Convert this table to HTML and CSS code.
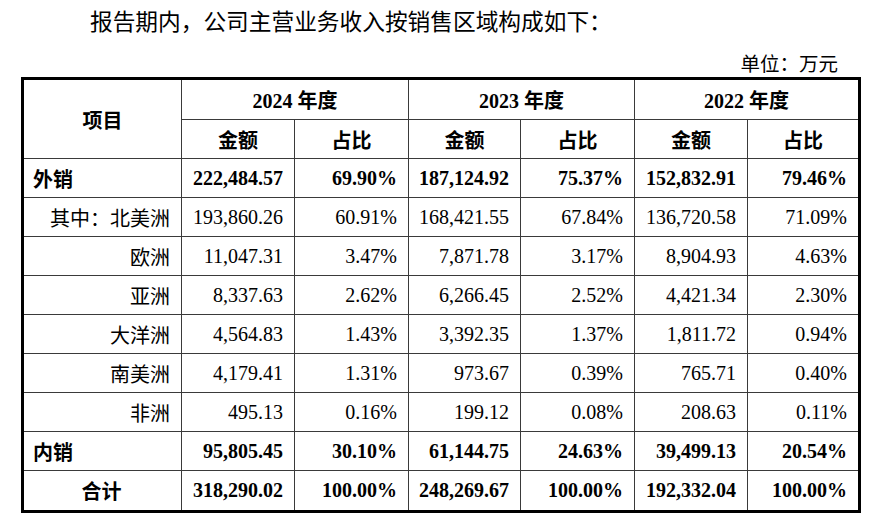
FILE: index.html
```html
<!DOCTYPE html>
<html lang="zh">
<head>
<meta charset="utf-8">
<title>主营业务收入按销售区域构成</title>
<link rel="stylesheet" href="styles.css">
</head>
<body>
<div class="page">
  <p class="intro">报告期内，公司主营业务收入按销售区域构成如下：</p>
  <p class="unit">单位：万元</p>
  <table class="sales">
    <colgroup>
      <col class="c-item">
      <col class="c-amt">
      <col class="c-pct">
      <col class="c-amt2">
      <col class="c-pct">
      <col class="c-amt">
      <col class="c-pct2">
    </colgroup>
    <thead>
      <tr class="hrow">
        <th rowspan="2">项目</th>
        <th colspan="2">2024 年度</th>
        <th colspan="2">2023 年度</th>
        <th colspan="2">2022 年度</th>
      </tr>
      <tr class="hrow2">
        <th>金额</th><th>占比</th>
        <th>金额</th><th>占比</th>
        <th>金额</th><th>占比</th>
      </tr>
    </thead>
    <tbody>
      <tr class="strong">
        <td class="lbl-left">外销</td>
        <td>222,484.57</td><td>69.90%</td>
        <td>187,124.92</td><td>75.37%</td>
        <td>152,832.91</td><td>79.46%</td>
      </tr>
      <tr>
        <td class="lbl-right">其中：北美洲</td>
        <td>193,860.26</td><td>60.91%</td>
        <td>168,421.55</td><td>67.84%</td>
        <td>136,720.58</td><td>71.09%</td>
      </tr>
      <tr>
        <td class="lbl-right">欧洲</td>
        <td>11,047.31</td><td>3.47%</td>
        <td>7,871.78</td><td>3.17%</td>
        <td>8,904.93</td><td>4.63%</td>
      </tr>
      <tr>
        <td class="lbl-right">亚洲</td>
        <td>8,337.63</td><td>2.62%</td>
        <td>6,266.45</td><td>2.52%</td>
        <td>4,421.34</td><td>2.30%</td>
      </tr>
      <tr>
        <td class="lbl-right">大洋洲</td>
        <td>4,564.83</td><td>1.43%</td>
        <td>3,392.35</td><td>1.37%</td>
        <td>1,811.72</td><td>0.94%</td>
      </tr>
      <tr>
        <td class="lbl-right">南美洲</td>
        <td>4,179.41</td><td>1.31%</td>
        <td>973.67</td><td>0.39%</td>
        <td>765.71</td><td>0.40%</td>
      </tr>
      <tr>
        <td class="lbl-right">非洲</td>
        <td>495.13</td><td>0.16%</td>
        <td>199.12</td><td>0.08%</td>
        <td>208.63</td><td>0.11%</td>
      </tr>
      <tr class="strong">
        <td class="lbl-left">内销</td>
        <td>95,805.45</td><td>30.10%</td>
        <td>61,144.75</td><td>24.63%</td>
        <td>39,499.13</td><td>20.54%</td>
      </tr>
      <tr class="strong total">
        <td class="lbl-center">合计</td>
        <td>318,290.02</td><td>100.00%</td>
        <td>248,269.67</td><td>100.00%</td>
        <td>192,332.04</td><td>100.00%</td>
      </tr>
    </tbody>
  </table>
</div>
</body>
</html>
```

FILE: styles.css
```css
html, body {
  margin: 0;
  padding: 0;
  background: #ffffff;
}

body {
  font-family: "Liberation Serif", "Noto Sans CJK SC", serif;
  color: #000000;
}

.page {
  width: 878px;
}

.intro {
  margin: 0;
  padding: 8px 0 0 90px;
  font-size: 22.7px;
  line-height: 30px;
  font-weight: 400;
}

.unit {
  margin: 15px 0 0 0;
  padding-right: 40px;
  text-align: right;
  font-size: 19.5px;
  line-height: 24px;
}

.sales {
  margin-left: 21px;
  border-collapse: collapse;
  border: 3px solid #000000;
  table-layout: fixed;
  font-size: 20px;
}

.c-item { width: 159px; }
.c-amt { width: 113px; }
.c-pct { width: 114px; }
.c-amt2 { width: 112px; }
.c-pct2 { width: 112px; }

.sales th,
.sales td {
  border: 1px solid #3a3a3a;
  padding: 0 11px 0 9px;
  height: 38px;
  white-space: nowrap;
  vertical-align: middle;
}

.sales th {
  font-weight: 700;
  text-align: center;
  padding: 0 4px;
}

.sales td {
  text-align: right;
}

.hrow th { height: 39px; }
.hrow2 th { height: 38px; }

.strong td {
  font-weight: 700;
}

.sales td.lbl-left {
  text-align: left;
}

.sales td.lbl-right {
  text-align: right;
}

.sales td.lbl-center {
  text-align: center;
}

.total td {
  height: 39px;
}
```
